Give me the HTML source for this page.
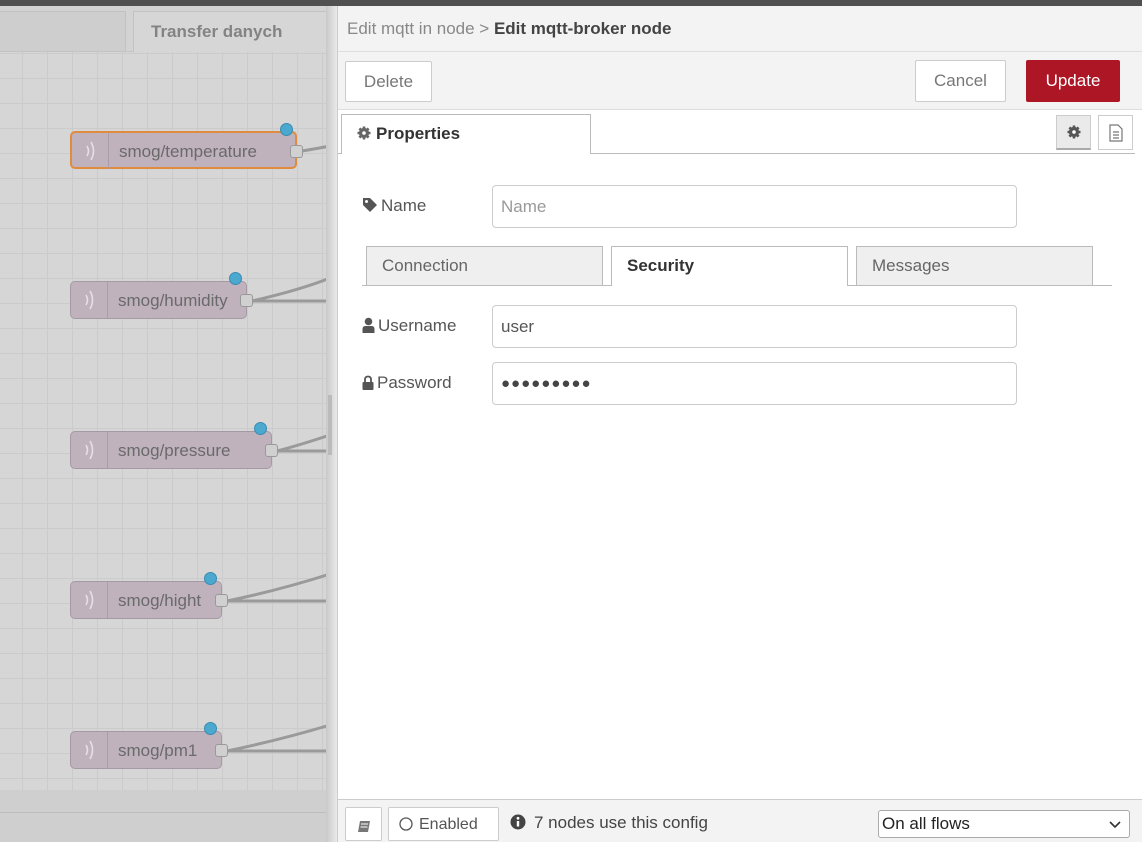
<!DOCTYPE html>
<html><head><style>
*{box-sizing:border-box;margin:0;padding:0}
body{width:1142px;height:842px;overflow:hidden;font-family:"Liberation Sans",sans-serif;position:relative;background:#d0d0d0}
.abs{position:absolute}
#canvas{left:0;top:52px;width:330px;height:738px;background-color:#d6d6d6;
background-image:linear-gradient(to right,#cbcbcb 1px,transparent 1px),linear-gradient(to bottom,#cbcbcb 1px,transparent 1px);
background-size:25px 25px;background-position:22px 1px}
.node{position:absolute;height:38px;background:#bfb2bd;border:1px solid #a59aa3;border-radius:5px;color:#6a6a6a;font-size:17px;line-height:36px}
.node .ic{position:absolute;left:0;top:0;width:37px;height:36px;border-right:1px solid #a99ea7}
.node .t{position:absolute;left:47px;top:1px}
.port{position:absolute;width:13px;height:13px;background:#d0d0d0;border:1px solid #999;border-radius:3px;top:12px}
.dot{position:absolute;width:13px;height:13px;background:#4ba9cf;border:1px solid #3a8bb0;border-radius:50%;top:-10px}
.btn{position:absolute;background:#fff;border:1px solid #ccc;color:#777;font-size:17px;text-align:center;border-radius:2px}
.inp{position:absolute;left:492px;width:525px;height:43px;border:1px solid #ccc;border-radius:4px;background:#fff;font-size:17px;padding-left:8px;line-height:41px;color:#555}
.lbl{position:absolute;left:362px;font-size:17px;color:#555}
.lbl svg{vertical-align:-2px;margin-right:3px}
.tab{position:absolute;top:246px;height:40px;border:1px solid #bbb;background:#efefef;font-size:17px;color:#666;padding-left:15px;line-height:38px}
</style></head><body>
<div class="abs" style="left:0;top:0;width:1142px;height:6px;background:#505050"></div>
<div class="abs" style="left:0;top:6px;width:330px;height:46px;background:#d3d3d3;border-bottom:1px solid #c4c4c4"></div>
<div class="abs" style="left:0;top:11px;width:126px;height:41px;background:#cecece;border:1px solid #c2c2c2;border-left:none"></div>
<div class="abs" style="left:133px;top:11px;width:200px;height:42px;background:#d6d6d6;border:1px solid #c2c2c2;border-bottom:none;font-weight:bold;color:#838383;font-size:17px;padding:10px 0 0 17px">Transfer danych</div>
<div id="canvas" class="abs"></div>
<div class="abs" style="left:0;top:790px;width:330px;height:52px;background:#cfcfcf"></div>
<div class="abs" style="left:0;top:812px;width:330px;height:1px;background:#bdbdbd"></div>
<svg class="abs" style="left:0;top:0" width="340" height="842">
<g fill="none" stroke="#9a9a9a" stroke-width="3">
<path d="M302 151 Q320 148 330 146"/>
<path d="M252 301 Q300 290 330 278"/><path d="M252 301 L330 301"/>
<path d="M277 451 Q300 445 330 435"/><path d="M277 451 L330 451"/>
<path d="M227 601 Q280 590 330 574"/><path d="M227 601 L330 601"/>
<path d="M227 751 Q280 740 330 725"/><path d="M227 751 L330 751"/>
</g></svg>
<svg width="0" height="0" style="position:absolute"><defs><g id="wv" fill="none" stroke="#e6dfe5" stroke-width="1.6"><path d="M15 13 Q18 18 15 23"/><path d="M19 9 Q24 18 19 27"/></g></defs></svg>
<div class="node" style="left:70px;top:131px;width:227px;border:2px solid #e08c3f"><span class="ic"><svg width="37" height="36"><use href="#wv"/></svg></span><span class="t">smog/temperature</span><span class="port" style="left:218px"></span><span class="dot" style="left:208px"></span></div>
<div class="node" style="left:70px;top:281px;width:177px"><span class="ic"><svg width="37" height="36"><use href="#wv"/></svg></span><span class="t">smog/humidity</span><span class="port" style="left:169px"></span><span class="dot" style="left:158px"></span></div>
<div class="node" style="left:70px;top:431px;width:202px"><span class="ic"><svg width="37" height="36"><use href="#wv"/></svg></span><span class="t">smog/pressure</span><span class="port" style="left:194px"></span><span class="dot" style="left:183px"></span></div>
<div class="node" style="left:70px;top:581px;width:152px"><span class="ic"><svg width="37" height="36"><use href="#wv"/></svg></span><span class="t">smog/hight</span><span class="port" style="left:144px"></span><span class="dot" style="left:133px"></span></div>
<div class="node" style="left:70px;top:731px;width:152px"><span class="ic"><svg width="37" height="36"><use href="#wv"/></svg></span><span class="t">smog/pm1</span><span class="port" style="left:144px"></span><span class="dot" style="left:133px"></span></div>
<!-- panel -->
<div class="abs" style="left:326px;top:6px;width:11px;height:836px;background:linear-gradient(to right,#c8c8c8,#eaeaea)"></div>
<div class="abs" style="left:328px;top:395px;width:4px;height:60px;background:#bbb"></div>
<div class="abs" style="left:337px;top:6px;width:805px;height:836px;background:#fff;border-left:1px solid #ccc"></div>
<div class="abs" style="left:338px;top:6px;width:804px;height:46px;background:#f3f3f3;border-bottom:1px solid #ddd;font-size:17px;color:#888;padding:13px 0 0 9px">Edit mqtt in node &gt; <b style="color:#444">Edit mqtt-broker node</b></div>
<div class="abs" style="left:338px;top:52px;width:804px;height:58px;background:#f3f3f3;border-bottom:1px solid #ddd"></div>
<div class="btn" style="left:345px;top:61px;width:87px;height:41px;line-height:39px">Delete</div>
<div class="btn" style="left:915px;top:60px;width:91px;height:42px;line-height:40px">Cancel</div>
<div class="btn" style="left:1026px;top:60px;width:94px;height:42px;line-height:40px;background:#ad1625;border-color:#ad1625;color:#fff">Update</div>
<div class="abs" style="left:338px;top:153px;width:797px;height:1px;background:#bbb"></div>
<svg width="0" height="0" style="position:absolute"><defs><g id="gear"><circle cx="7" cy="7" r="4.6"/><g stroke-width="2.6"><path d="M7 0.5V13.5M0.5 7H13.5M2.4 2.4L11.6 11.6M11.6 2.4L2.4 11.6"/></g><circle cx="7" cy="7" r="1.8" fill="#fff" stroke="none"/></g></defs></svg>
<div class="abs" style="left:341px;top:114px;width:250px;height:40px;background:#fff;border:1px solid #bbb;border-bottom:none;font-weight:bold;font-size:17px;color:#333;padding:9px 0 0 15px"><svg width="14" height="14" style="vertical-align:-1px;margin-right:5px" fill="#666" stroke="#666"><use href="#gear"/></svg>Properties</div>
<div class="abs" style="left:1056px;top:115px;width:35px;height:35px;background:#eaeaea;border:1px solid #ccc;border-bottom:2px solid #aaa;text-align:center;padding-top:9px"><svg width="14" height="14" fill="#555" stroke="#555"><use href="#gear"/></svg></div>
<div class="abs" style="left:1098px;top:115px;width:35px;height:35px;background:#fff;border:1px solid #ccc;text-align:center;padding-top:8px"><svg width="14" height="18" fill="none" stroke="#777" stroke-width="1.2"><path d="M1 1H9L13 5V17H1Z"/><path d="M4 8H10M4 11H10M4 14H10"/></svg></div>
<div class="lbl" style="top:196px"><svg width="16" height="16"><path d="M1 1H8L15 8L8 15L1 8Z" fill="#555"/><circle cx="4.5" cy="4.5" r="1.5" fill="#fff"/></svg>Name</div>
<div class="inp" style="top:185px;color:#999">Name</div>
<div class="abs" style="left:362px;top:285px;width:750px;height:1px;background:#bbb"></div>
<div class="tab" style="left:366px;width:237px">Connection</div>
<div class="tab" style="left:611px;width:237px;background:#fff;border-bottom:none;font-weight:bold;color:#333;height:40px">Security</div>
<div class="tab" style="left:856px;width:237px">Messages</div>
<div class="lbl" style="top:316px"><svg width="13" height="16" fill="#555"><circle cx="6.5" cy="4.5" r="3.8"/><path d="M0.5 16V12Q0.5 9 3.5 9H9.5Q12.5 9 12.5 12V16Z"/></svg>Username</div>
<div class="inp" style="top:305px">user</div>
<div class="lbl" style="top:373px"><svg width="12" height="15"><path d="M3 7V4.5Q3 1.5 6 1.5Q9 1.5 9 4.5V7" fill="none" stroke="#555" stroke-width="1.8"/><rect x="0.5" y="7" width="11" height="8" rx="1" fill="#555"/></svg>Password</div>
<div class="inp" style="top:362px;letter-spacing:1px;font-size:15px;color:#444">●●●●●●●●●</div>
<div class="abs" style="left:338px;top:799px;width:804px;height:43px;background:#f3f3f3;border-top:1px solid #ccc"></div>
<div class="btn" style="left:345px;top:807px;width:37px;height:34px;padding-top:10px"><svg width="14" height="13"><path d="M3 1H13L11 12H1Z" fill="#777"/><path d="M4 4H11M3.5 7H10.5" stroke="#fff" stroke-width="1"/></svg></div>
<div class="btn" style="left:388px;top:807px;width:111px;height:34px;line-height:34px;color:#555;font-size:16px;text-align:left;padding-left:10px"><svg width="14" height="14" style="vertical-align:-2px;margin-right:6px"><circle cx="7" cy="7" r="6" fill="none" stroke="#555" stroke-width="1.3"/></svg>Enabled</div>
<div class="abs" style="left:510px;top:813px;font-size:17px;color:#444"><svg width="16" height="16" style="vertical-align:-2px;margin-right:8px"><circle cx="8" cy="8" r="7.5" fill="#444"/><rect x="6.8" y="7" width="2.4" height="5.5" fill="#fff"/><circle cx="8" cy="4.3" r="1.4" fill="#fff"/></svg>7 nodes use this config</div>
<div class="abs" style="left:878px;top:810px;width:252px;height:28px;background:#fff;border:1px solid #aaa;border-radius:3px;font-size:17px;color:#222;padding:3px 0 0 3px">On all flows<svg width="12" height="8" style="position:absolute;right:8px;top:10px"><path d="M1 1L6 6L11 1" fill="none" stroke="#333" stroke-width="1.6"/></svg></div>
</body></html>
